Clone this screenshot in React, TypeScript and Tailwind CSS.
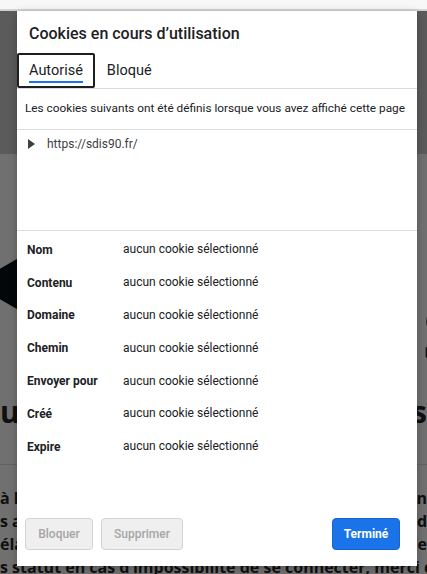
import React from "react";

const details = ["Nom", "Contenu", "Domaine", "Chemin", "Envoyer pour", "Créé", "Expire"];

function BackgroundPage() {
  return (
    <div className="flex flex-col font-['Open_Sans',sans-serif] text-[#262626]">
      <div className="h-[144px] bg-[#d0d0d0]" />
      <section className="flex h-[310px] flex-col bg-white">
        <div className="mt-[95px] flex items-start justify-between">
          <svg width="60" height="70" viewBox="0 0 60 70" className="-ml-[26px] shrink-0">
            <polygon points="0,35 60,0 60,70" fill="#0b1015" />
          </svg>
          <span className="-mr-[36px] mt-[46px] text-[74px] font-bold leading-none">S</span>
        </div>
        <div className="mt-[28px] flex justify-between text-[30px] font-bold leading-none">
          <span>u</span>
          <span>s</span>
        </div>
      </section>
      <div className="border-t border-[#e0e0e0] pt-[22px] text-[16px] font-bold leading-[23px]">
        <div className="flex justify-between whitespace-nowrap">
          <span>à la</span>
          <span>on</span>
        </div>
        <div className="flex justify-between whitespace-nowrap">
          <span>s au</span>
          <span>d</span>
        </div>
        <div className="flex justify-between whitespace-nowrap">
          <span>éla</span>
          <span>le</span>
        </div>
        <div className="overflow-hidden whitespace-nowrap">
          s statut en cas d’impossibilité de se connecter, merci de conta
        </div>
      </div>
    </div>
  );
}

function Dialog() {
  return (
    <div className="absolute left-[17px] top-[11px] flex h-[555px] w-[400px] flex-col bg-white font-['Roboto',sans-serif] text-[#202124] shadow-[0_2px_8px_rgba(0,0,0,0.25)]">
      <h1 className="px-[12px] pt-[13px] text-[16px] font-medium leading-[20px]">
        Cookies en cours d’utilisation
      </h1>

      <div className="mt-[9px] flex h-[36px] items-stretch border-b border-[#dadce0]">
        <button className="relative flex items-center rounded-[2px] border-2 border-[#1f1f1f] px-[10px] pt-[1px] text-[14.5px] leading-none">
          <span className="relative">
            Autorisé
            <span className="absolute inset-x-0 -bottom-[5px] h-[2px] bg-[#1a73e8]" />
          </span>
        </button>
        <button className="flex items-center px-[12px] pt-[1px] text-[14.5px] leading-none">Bloqué</button>
      </div>

      <div className="flex h-[41px] items-center whitespace-nowrap border-b border-[#dadce0] px-[8px] text-[11.8px]">
        Les cookies suivants ont été définis lorsque vous avez affiché cette page
      </div>

      <div className="h-[101px] border-b border-[#dadce0]">
        <div className="flex h-[27px] items-center pl-[11px] text-[12px] text-[#3c4043]">
          <svg width="7" height="10" viewBox="0 0 7 10" className="shrink-0">
            <polygon points="0,0 7,5 0,10" fill="#3c4043" />
          </svg>
          <span className="ml-[12px]">https://sdis90.fr/</span>
        </div>
      </div>

      <div className="flex flex-col pt-[2px]">
        {details.map((label) => (
          <div key={label} className="flex h-[32.8px] items-center text-[12px]">
            <span className="w-[106px] shrink-0 pl-[10px] pt-[1px] font-bold">{label}</span>
            <span>aucun cookie sélectionné</span>
          </div>
        ))}
      </div>

      <div className="mt-auto flex items-center pb-[16px] pl-[8px] pr-[17px]">
        <button className="h-[32px] w-[68px] rounded-[4px] border border-[#d3d3d3] bg-[#efefef] text-[12px] font-medium text-[#a6a6a6]">
          Bloquer
        </button>
        <button className="ml-[8px] h-[32px] w-[82px] rounded-[4px] border border-[#d3d3d3] bg-[#efefef] text-[12px] font-medium text-[#a6a6a6]">
          Supprimer
        </button>
        <button className="ml-auto h-[32px] w-[68px] rounded-[4px] border border-[#1765cc] bg-[#1a73e8] text-[12px] font-bold text-white">
          Terminé
        </button>
      </div>
    </div>
  );
}

export default function App() {
  return (
    <div className="relative h-[574px] w-[427px] overflow-hidden bg-white">
      <div className="h-[10px] border-b border-[#d6d6d6] bg-[#f7f7f7]" />
      <BackgroundPage />
      <div className="absolute inset-x-0 bottom-0 top-[11px] bg-black/[0.56]" />
      <Dialog />
    </div>
  );
}
